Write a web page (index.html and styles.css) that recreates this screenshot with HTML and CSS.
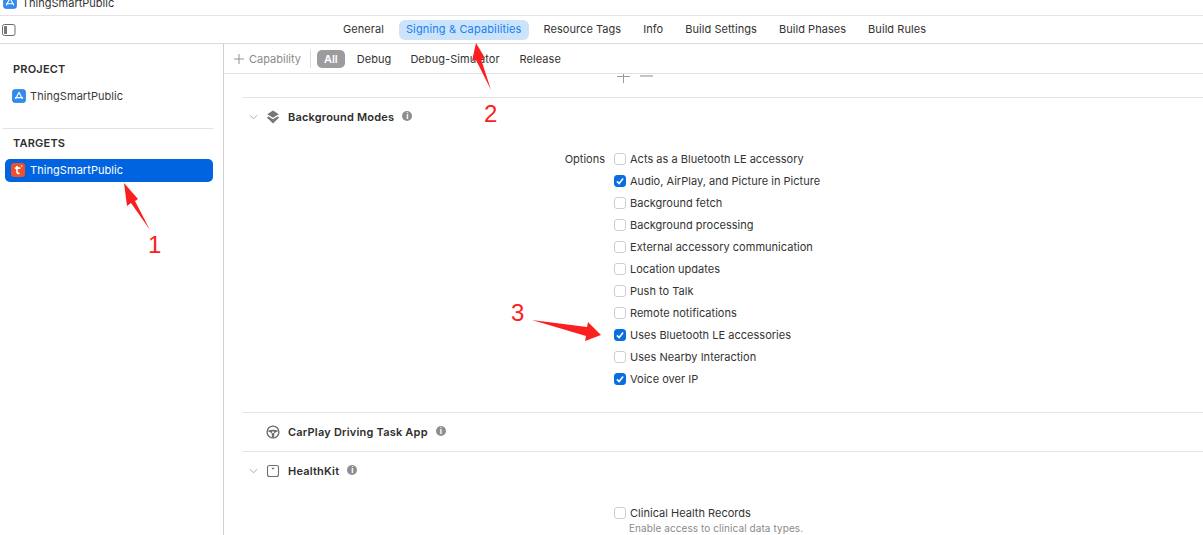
FILE: index.html
```html
<!DOCTYPE html>
<html lang="en">
<head>
<meta charset="utf-8">
<title>ThingSmartPublic</title>
<link rel="stylesheet" href="styles.css">
</head>
<body>
<div class="app">
  <header class="titlebar">
    <svg class="xc-icon title-icon" viewBox="0 0 14 14"><rect x="0.5" y="0.5" width="13" height="13" rx="2.5" fill="#2f8cf2" stroke="#1f6fd0" stroke-width=".6"/><path d="M7 3 L3.2 10.6 M7 3 L10.8 10.6 M3 8.8 H11" stroke="#fff" stroke-width="1.1" fill="none"/></svg>
    <span class="title-text">ThingSmartPublic</span>
  </header>
  <nav class="tabbar">
    <svg class="sidebar-toggle" viewBox="0 0 14 12"><rect x="0.5" y="0.5" width="12.5" height="11" rx="2" fill="none" stroke="#6b6b6b"/><rect x="2" y="2" width="3" height="8" rx=".6" fill="#777"/></svg>
    <div class="tabs">
      <a class="tab">General</a>
      <a class="tab active">Signing &amp; Capabilities</a>
      <a class="tab">Resource Tags</a>
      <a class="tab">Info</a>
      <a class="tab">Build Settings</a>
      <a class="tab">Build Phases</a>
      <a class="tab">Build Rules</a>
    </div>
  </nav>
  <div class="main">
    <aside class="sidebar">
      <h2 class="side-head">PROJECT</h2>
      <div class="side-item">
        <svg class="xc-icon" viewBox="0 0 14 14"><rect x="0.5" y="0.5" width="13" height="13" rx="2.5" fill="#2f8cf2" stroke="#1f6fd0" stroke-width=".6"/><path d="M7 3.2 L3.6 10 M7 3.2 L10.4 10 M3 8.6 H11" stroke="#fff" stroke-width="1.1" fill="none"/></svg>
        <span>ThingSmartPublic</span>
      </div>
      <hr class="side-rule">
      <h2 class="side-head targets">TARGETS</h2>
      <div class="side-item selected">
        <svg class="xc-icon" viewBox="0 0 14 14"><rect width="14" height="14" rx="3" fill="#f0502a"/><path d="M6 3 V9 Q6 10.6 8.6 10.4 M3.8 5.2 H9.4" stroke="#fff" stroke-width="1.7" fill="none"/><circle cx="10.6" cy="3" r=".8" fill="#fff"/></svg>
        <span>ThingSmartPublic</span>
      </div>
    </aside>
    <section class="content">
      <div class="capbar">
        <span class="add-cap"><svg class="plus" viewBox="0 0 11 11"><path d="M5.5 0 V11 M0 5.5 H11" stroke="#8a8a8a" stroke-width="1"/></svg>Capability</span>
        <span class="cap-div"></span>
        <span class="filter on">All</span>
        <span class="filter">Debug</span>
        <span class="filter">Debug-Simulator</span>
        <span class="filter">Release</span>
      </div>
      <div class="scroll">
        <div class="plusminus"><span class="pm-plus"></span><span class="pm-minus"></span></div>
        <div class="cap-section modes">
          <div class="cap-head">
            <svg class="chev" viewBox="0 0 10 6"><path d="M1 1 L5 5 L9 1" fill="none" stroke="#a8a8a8" stroke-width="1.1"/></svg>
            <svg class="cap-icon" viewBox="0 0 14 14"><path d="M7 .6 L12.8 4.2 L7 7.8 L1.2 4.2 Z" fill="#777"/><path d="M2.4 6.4 L.8 7.6 L7 13.4 L13.2 7.6 L11.6 6.4 L7 9.2 Z" fill="#777"/></svg>
            <strong>Background Modes</strong>
            <span class="info">i</span>
          </div>
          <div class="options">
            <div class="opt-label">Options</div>
            <ul class="opt-list">
              <li class="opt"><span class="cb"></span>Acts as a Bluetooth LE accessory</li>
              <li class="opt"><span class="cb on"><svg viewBox="0 0 14 14"><path d="M3.4 7.4 L6 10 L10.6 4" fill="none" stroke="#fff" stroke-width="1.8"/></svg></span>Audio, AirPlay, and Picture in Picture</li>
              <li class="opt"><span class="cb"></span>Background fetch</li>
              <li class="opt"><span class="cb"></span>Background processing</li>
              <li class="opt"><span class="cb"></span>External accessory communication</li>
              <li class="opt"><span class="cb"></span>Location updates</li>
              <li class="opt"><span class="cb"></span>Push to Talk</li>
              <li class="opt"><span class="cb"></span>Remote notifications</li>
              <li class="opt"><span class="cb on"><svg viewBox="0 0 14 14"><path d="M3.4 7.4 L6 10 L10.6 4" fill="none" stroke="#fff" stroke-width="1.8"/></svg></span>Uses Bluetooth LE accessories</li>
              <li class="opt"><span class="cb"></span>Uses Nearby Interaction</li>
              <li class="opt"><span class="cb on"><svg viewBox="0 0 14 14"><path d="M3.4 7.4 L6 10 L10.6 4" fill="none" stroke="#fff" stroke-width="1.8"/></svg></span>Voice over IP</li>
            </ul>
          </div>
        </div>
        <div class="cap-section carplay">
          <div class="cap-head">
            <span class="chev-gap"></span>
            <svg class="cap-icon" viewBox="0 0 14 14"><circle cx="7" cy="7" r="5.9" fill="none" stroke="#6e6e6e" stroke-width="1.4"/><path d="M1.4 6 Q7 3.6 12.6 6 L8.4 8 L8 12.6 H6 L5.6 8 Z" fill="#6e6e6e"/><circle cx="7" cy="7.2" r="1" fill="#fff"/></svg>
            <strong>CarPlay Driving Task App</strong>
            <span class="info">i</span>
          </div>
        </div>
        <div class="cap-section health">
          <div class="cap-head">
            <svg class="chev" viewBox="0 0 10 6"><path d="M1 1 L5 5 L9 1" fill="none" stroke="#a8a8a8" stroke-width="1.1"/></svg>
            <svg class="cap-icon" viewBox="0 0 14 14"><rect x="1.5" y="1.5" width="11" height="11" rx="2" fill="none" stroke="#6e6e6e" stroke-width="1.1"/><path d="M5.4 3.8 H8.6 L7 5.8 Z" fill="#6e6e6e"/></svg>
            <strong>HealthKit</strong>
            <span class="info">i</span>
          </div>
          <div class="clinical">
            <div class="opt"><span class="cb"></span>Clinical Health Records</div>
            <div class="opt-desc">Enable access to clinical data types.</div>
          </div>
        </div>
      </div>
    </section>
  </div>
  <svg class="arrows" viewBox="0 0 1203 535">
    <path d="M124 183 L138 199 L135 201 L150 230 L131 203 L127 206 Z" fill="#fb2020"/>
    <path d="M476 43 L485 58 L481 59 L491 90 L476 60 L472 61 Z" fill="#fb2020"/>
    <path d="M601 335 L585 341 L586 336 L532 320 L587 327 L588 322 Z" fill="#fb2020"/>
  </svg>
  <span class="mark mark-1">1</span>
  <span class="mark mark-2">2</span>
  <span class="mark mark-3">3</span>
</div>
</body>
</html>
```
FILE: styles.css
```css
* { box-sizing: border-box; }
html, body { margin: 0; padding: 0; height: 535px; overflow: hidden; background: #fff; }
body { font-family: Inter, "Liberation Sans", sans-serif; font-size: 11px; color: #2e2e2e; }
.app { position: relative; width: 1203px; height: 535px; overflow: hidden; display: flex; flex-direction: column; }

.titlebar { height: 16px; border-bottom: 1px solid #e4e4e4; padding-left: 3px; display: flex; align-items: flex-end; overflow: hidden; flex: none; position: relative; }
.title-icon { position: relative; top: -6px; margin-right: 5px; }
.title-text { position: relative; top: -5px; color: #333; }
.xc-icon { width: 14px; height: 14px; flex: none; display: block; }

.tabbar { height: 28px; border-bottom: 1px solid #dcdcdc; display: flex; align-items: center; flex: none; padding-left: 2px; }
.sidebar-toggle { width: 14px; height: 12px; flex: none; }
.tabs { display: flex; gap: 8px; margin-left: 320px; }
.tab { padding: 0 7px; height: 20px; line-height: 19px; border-radius: 6px; color: #333; white-space: nowrap; letter-spacing: .05px; }
.tab.active { background: #cbe4fb; color: #1a7ff0; letter-spacing: .14px; }

.main { flex: 1; display: flex; min-height: 0; }
.sidebar { width: 224px; flex: none; border-right: 1px solid #cfcfcf; padding: 0 10px 0 3px; }
.side-head { margin: 0; font-size: 11px; font-weight: 600; color: #2e2e2e; padding-left: 10px; height: 13px; line-height: 13px; letter-spacing: .2px; }
.sidebar > .side-head:first-child { margin-top: 19px; }
.side-item { display: flex; align-items: center; gap: 4px; height: 22px; padding-left: 9px; margin-top: 9px; color: #3a3a3a; letter-spacing: .06px; }
.side-rule { border: 0; border-top: 1px solid #e2e2e2; margin: 21px 0 0; }
.side-head.targets { margin-top: 8px; }
.side-item.selected { background: #0064e0; color: #fff; border-radius: 5px; margin: 9px 0 0 2px; padding: 0 0 1px 6px; gap: 5px; height: 23px; width: 208px; }

.content { flex: 1; min-width: 0; display: flex; flex-direction: column; }
.capbar { height: 30px; flex: none; border-bottom: 1px solid #e2e2e2; display: flex; align-items: center; padding-left: 10px; color: #333; }
.add-cap { display: flex; align-items: center; gap: 5px; color: #8a8a8a; }
.plus { width: 10px; height: 10px; }
.cap-div { width: 1px; height: 18px; background: #dedede; margin: 0 6px 0 9px; }
.filter { height: 18px; line-height: 18px; padding: 0 6px; border-radius: 5px; margin-right: 1px; letter-spacing: .06px; }
.filter.on { background: #9c9c9f; color: #fff; font-weight: 600; margin-right: 6px; padding: 0 7px; letter-spacing: 0; }
.filter + .filter + .filter { margin-left: 6px; }
.filter + .filter + .filter + .filter { margin-left: 7px; }

.scroll { flex: 1; min-height: 0; overflow: hidden; padding-left: 18px; }
.plusminus { height: 23px; position: relative; overflow: hidden; display: flex; gap: 10px; padding-left: 375px; }
.pm-plus { width: 13px; height: 9px; position: relative; }
.pm-plus::before { content: ""; position: absolute; left: 6px; top: 0; width: 1px; height: 9px; background: #9a9a9a; }
.pm-plus::after { content: ""; position: absolute; left: 0; top: 2px; width: 13px; height: 1px; background: #9a9a9a; }
.pm-minus { width: 13px; height: 2px; margin-top: 1px; background: #c4c4c4; }

.cap-section { border-top: 1px solid #e4e4e4; }
.cap-head { display: flex; align-items: center; height: 38px; padding-left: 7px; }
.cap-head strong { font-weight: 600; color: #2e2e2e; letter-spacing: .2px; }
.chev { width: 9px; height: 6px; flex: none; margin-right: 8px; }
.chev-gap { width: 17px; flex: none; }
.cap-icon { width: 14px; height: 14px; flex: none; margin-right: 8px; }
.info { width: 10px; height: 10px; border-radius: 50%; background: #8e8e8e; color: #fff; font-size: 8px; font-weight: 700; line-height: 10px; text-align: center; margin-left: 8px; margin-top: -2px; flex: none; }

.options { display: flex; margin-top: 12px; padding-bottom: 22px; }
.opt-label { width: 363px; text-align: right; height: 22px; line-height: 22px; color: #333; }
.opt-list { list-style: none; margin: 0; padding: 0 0 0 9px; }
.opt { display: flex; align-items: center; height: 22px; color: #333; white-space: nowrap; letter-spacing: .02px; }
.cb { width: 12px; height: 12px; border: 1px solid #cfcfcf; border-radius: 3px; background: #fff; margin-right: 4px; flex: none; }
.cb svg { display: block; width: 12px; height: 12px; }
.cb.on { background: #0a6ee0; border-color: #0a6ee0; }
.cb.on svg { margin: -1px; width: 12px; height: 12px; }

.carplay { height: 39px; }
.clinical { margin: 12px 0 0 372px; }
.opt-desc { padding-left: 15px; font-size: 10px; color: #8a8a8a; margin-top: -2px; letter-spacing: .08px; }

.arrows { position: absolute; left: 0; top: 0; width: 1203px; height: 535px; pointer-events: none; }
.mark { position: absolute; font-size: 24px; line-height: 24px; color: #fb2020; font-family: "Liberation Sans", sans-serif; }
.mark-1 { left: 148px; top: 233px; }
.mark-2 { left: 484px; top: 102px; }
.mark-3 { left: 511px; top: 301px; }
```
